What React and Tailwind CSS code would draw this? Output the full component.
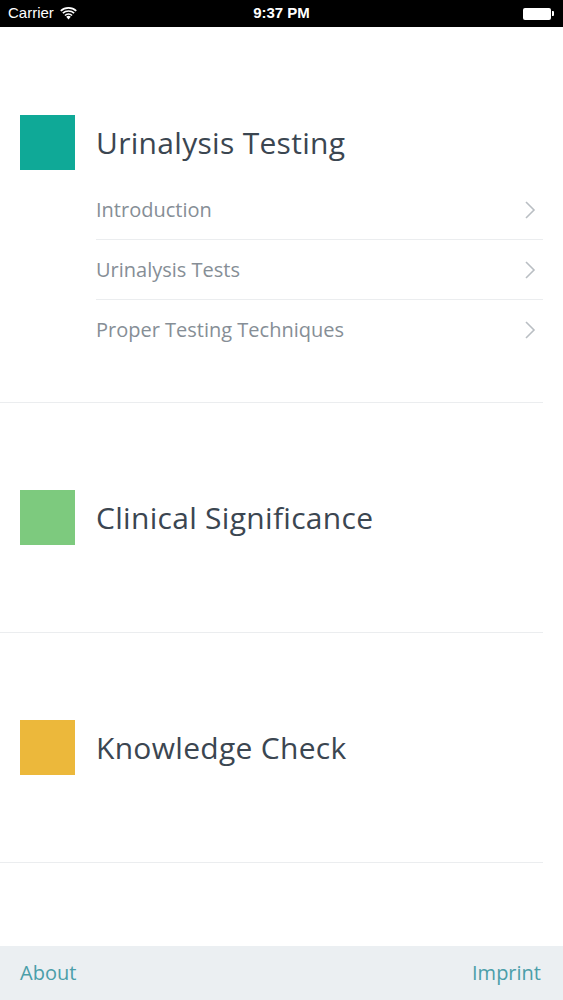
import React from "react";

const sections = [
  {
    title: "Urinalysis Testing",
    color: "bg-[#0fa997]",
    items: ["Introduction", "Urinalysis Tests", "Proper Testing Techniques"],
  },
  { title: "Clinical Significance", color: "bg-[#7dca7e]", items: [] },
  { title: "Knowledge Check", color: "bg-[#ecb83b]", items: [] },
];

const StatusBar = () => (
  <div className="h-[27px] bg-black text-white flex items-center justify-between px-2 text-[15px] font-['Liberation_Sans',sans-serif] relative">
    <div className="flex items-center gap-[6px]">
      <span>Carrier</span>
      <svg width="17" height="13" viewBox="0 0 17 13" fill="white">
        <path d="M8.5 12.5 L6.2 9.8 A3.5 3.5 0 0 1 10.8 9.8 Z" />
        <path d="M4.4 7.9 A6.2 6.2 0 0 1 12.6 7.9 L11.5 9.1 A4.6 4.6 0 0 0 5.5 9.1 Z" />
        <path d="M2.3 5.6 A9.2 9.2 0 0 1 14.7 5.6 L13.6 6.8 A7.6 7.6 0 0 0 3.4 6.8 Z" />
        <path d="M0.2 3.3 A12.2 12.2 0 0 1 16.8 3.3 L15.7 4.5 A10.6 10.6 0 0 0 1.3 4.5 Z" />
      </svg>
    </div>
    <span className="absolute left-1/2 -translate-x-1/2 font-bold">9:37 PM</span>
    <div className="flex items-center mr-[1px]">
      <div className="w-[28px] h-[12px] bg-white rounded-[2px]" />
      <div className="w-[2px] h-[5px] bg-white ml-[1px] rounded-r-[1px]" />
    </div>
  </div>
);

const Section = ({ title, color, items }) => (
  <div
    className={`border-b border-[#ebedef] mr-[20px] ${
      items.length ? "pt-[88px] pb-[42px]" : "py-[87px]"
    }`}
  >
    <div className="flex items-center h-[55px]">
      <div className={`w-[55px] h-[55px] ml-[20px] ${color}`} />
      <div className="ml-[21px] text-[30px] text-[#3b4651] tracking-[0.3px]">{title}</div>
    </div>
    {items.length > 0 && (
      <div className="ml-[96px] mt-[10px]">
        {items.map((item, i) => (
          <div
            key={item}
            className={`h-[60px] flex items-center justify-between ${
              i < items.length - 1 ? "border-b border-[#ebedef]" : ""
            }`}
          >
            <span className="text-[20px] text-[#868e96]">{item}</span>
            <svg width="12" height="20" viewBox="0 0 12 20" fill="none" className="mr-[7px]">
              <path d="M2 2 L10 10 L2 18" stroke="#b9bec3" strokeWidth="1.6" />
            </svg>
          </div>
        ))}
      </div>
    )}
  </div>
);

export default function App() {
  return (
    <div className="w-[563px] h-[1000px] bg-white flex flex-col font-['Open_Sans',sans-serif]">
      <StatusBar />
      <div className="flex-1">
        {sections.map((s) => (
          <Section key={s.title} {...s} />
        ))}
      </div>
      <div className="h-[54px] bg-[#ebeff2] flex items-center justify-between pl-[20px] pr-[22px] text-[20px] text-[#4a9ea9]">
        <span>About</span>
        <span>Imprint</span>
      </div>
    </div>
  );
}
